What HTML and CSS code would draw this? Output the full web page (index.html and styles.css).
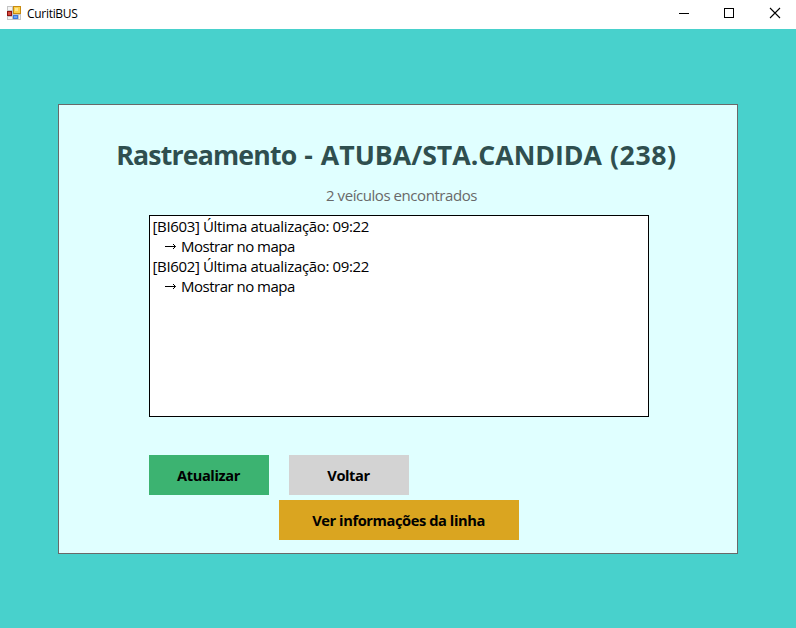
FILE: index.html
```html
<!DOCTYPE html>
<html lang="pt-BR">
<head>
<meta charset="utf-8">
<title>CuritiBUS</title>
<link rel="stylesheet" href="styles.css">
</head>
<body>
<header class="titlebar">
  <svg class="app-icon" width="14" height="14" viewBox="0 0 14 14" shape-rendering="crispEdges">
    <rect width="14" height="14" fill="#c4c4c4"/>
    <path d="M1 1h4v3H1zM1 11h4v2H1zM12 9h1v4h-1z" fill="#f4f4f4"/>
    <rect x="0" y="5" width="5" height="5" fill="#8c1210"/>
    <rect x="1" y="6" width="3" height="3" fill="#d84a3c"/>
    <rect x="6" y="0" width="8" height="8" fill="#c88a10"/>
    <rect x="7" y="1" width="6" height="6" fill="#fbd04a"/>
    <rect x="8" y="2" width="3" height="3" fill="#ffe68c"/>
    <rect x="6" y="9" width="5" height="4" fill="#3a78dc"/>
    <rect x="7" y="10" width="3" height="2" fill="#6aa4f4"/>
  </svg>
  <span class="app-name">CuritiBUS</span>
  <div class="controls">
    <svg width="46" height="29" viewBox="0 0 46 29"><path d="M19 13.5h10" stroke="#000"/></svg>
    <svg width="46" height="29" viewBox="0 0 46 29"><rect x="18.5" y="8.500" width="9" height="9" fill="none" stroke="#000"/></svg>
    <svg width="46" height="29" viewBox="0 0 46 29"><path d="M18 8l10 10M28 8L18 18" stroke="#000" stroke-width="1.1"/></svg>
  </div>
</header>
<main class="client">
  <section class="panel">
    <h1 class="heading"><span class="topic">Rastreamento</span> - <span class="route">ATUBA/STA.CANDIDA</span> <span class="code">(238)</span></h1>
    <p class="count">2 veículos encontrados</p>
    <ul class="list">
      <li>[BI603] Última atualização: 09:22</li>
      <li class="sub"><svg class="arrow" width="12" height="8" viewBox="0 0 12 8"><path d="M0 4.500h10.500M8 2l2.500 2.500L8 7" fill="none" stroke="#000"/></svg>Mostrar no mapa</li>
      <li>[BI602] Última atualização: 09:22</li>
      <li class="sub"><svg class="arrow" width="12" height="8" viewBox="0 0 12 8"><path d="M0 4.500h10.500M8 2l2.500 2.500L8 7" fill="none" stroke="#000"/></svg>Mostrar no mapa</li>
    </ul>
    <div class="actions">
      <button class="btn refresh">Atualizar</button>
      <button class="btn back">Voltar</button>
    </div>
    <button class="btn info">Ver informações da linha</button>
  </section>
</main>
</body>
</html>
```
FILE: styles.css
```css
* { box-sizing: border-box; }
body {
  margin: 0;
  width: 796px;
  height: 628px;
  overflow: hidden;
  font-family: "Open Sans", "Noto Sans", sans-serif;
  color: #000;
}
.titlebar {
  display: flex;
  align-items: flex-start;
  height: 29px;
  padding-left: 7px;
  background: #fff;
}
.app-icon { margin-top: 6px; }
.app-name {
  margin-left: 6px;
  font-size: 12px;
  line-height: 27px;
  letter-spacing: -0.3px;
}
.controls { display: flex; margin-left: auto; margin-right: -2px; }
.client {
  height: 599px;
  padding: 75px 58px;
  background: #48d1cc;
}
.panel {
  width: 680px;
  height: 450px;
  padding: 29px 89px 0 90px;
  border: 1px solid #696969;
  background: #e0ffff;
}
.heading {
  margin: 0 -58px 0 -62px;
  font-size: 26.67px;
  line-height: 42px;
  font-weight: 700;
  text-align: center;
  white-space: nowrap;
  word-spacing: 1px;
  color: #2f4f4f;
}
.topic { letter-spacing: -0.82px; }
.route { letter-spacing: 0; }
.code { letter-spacing: 0.6px; }
.count {
  margin: 8px 0 0 6px;
  font-size: 15px;
  line-height: 22px;
  text-align: center;
  letter-spacing: -0.44px;
  color: #696969;
}
.list {
  list-style: none;
  width: 500px;
  height: 202px;
  margin: 9px 0 0;
  padding: 0 2.5px;
  border: 1px solid #000;
  background: #fff;
  font-size: 15px;
  line-height: 20px;
  letter-spacing: -0.35px;
}
.list li { height: 20px; white-space: nowrap; }
.list .sub { display: flex; align-items: center; padding-left: 12.5px; letter-spacing: -0.5px; }
.arrow { margin-right: 4px; }
.actions { display: flex; gap: 20px; margin-top: 38px; }
.btn {
  width: 120px;
  height: 40px;
  padding: 0 1px 0 0;
  border: 0;
  font: 700 14.670px/40px "Open Sans", "Noto Sans", sans-serif;
  letter-spacing: -0.42px;
  color: #000;
}
.refresh { background: #3cb371; }
.back { background: #d3d3d3; }
.info { display: block; width: 240px; margin: 5px auto 0 130px; background: #daa520; }
```
